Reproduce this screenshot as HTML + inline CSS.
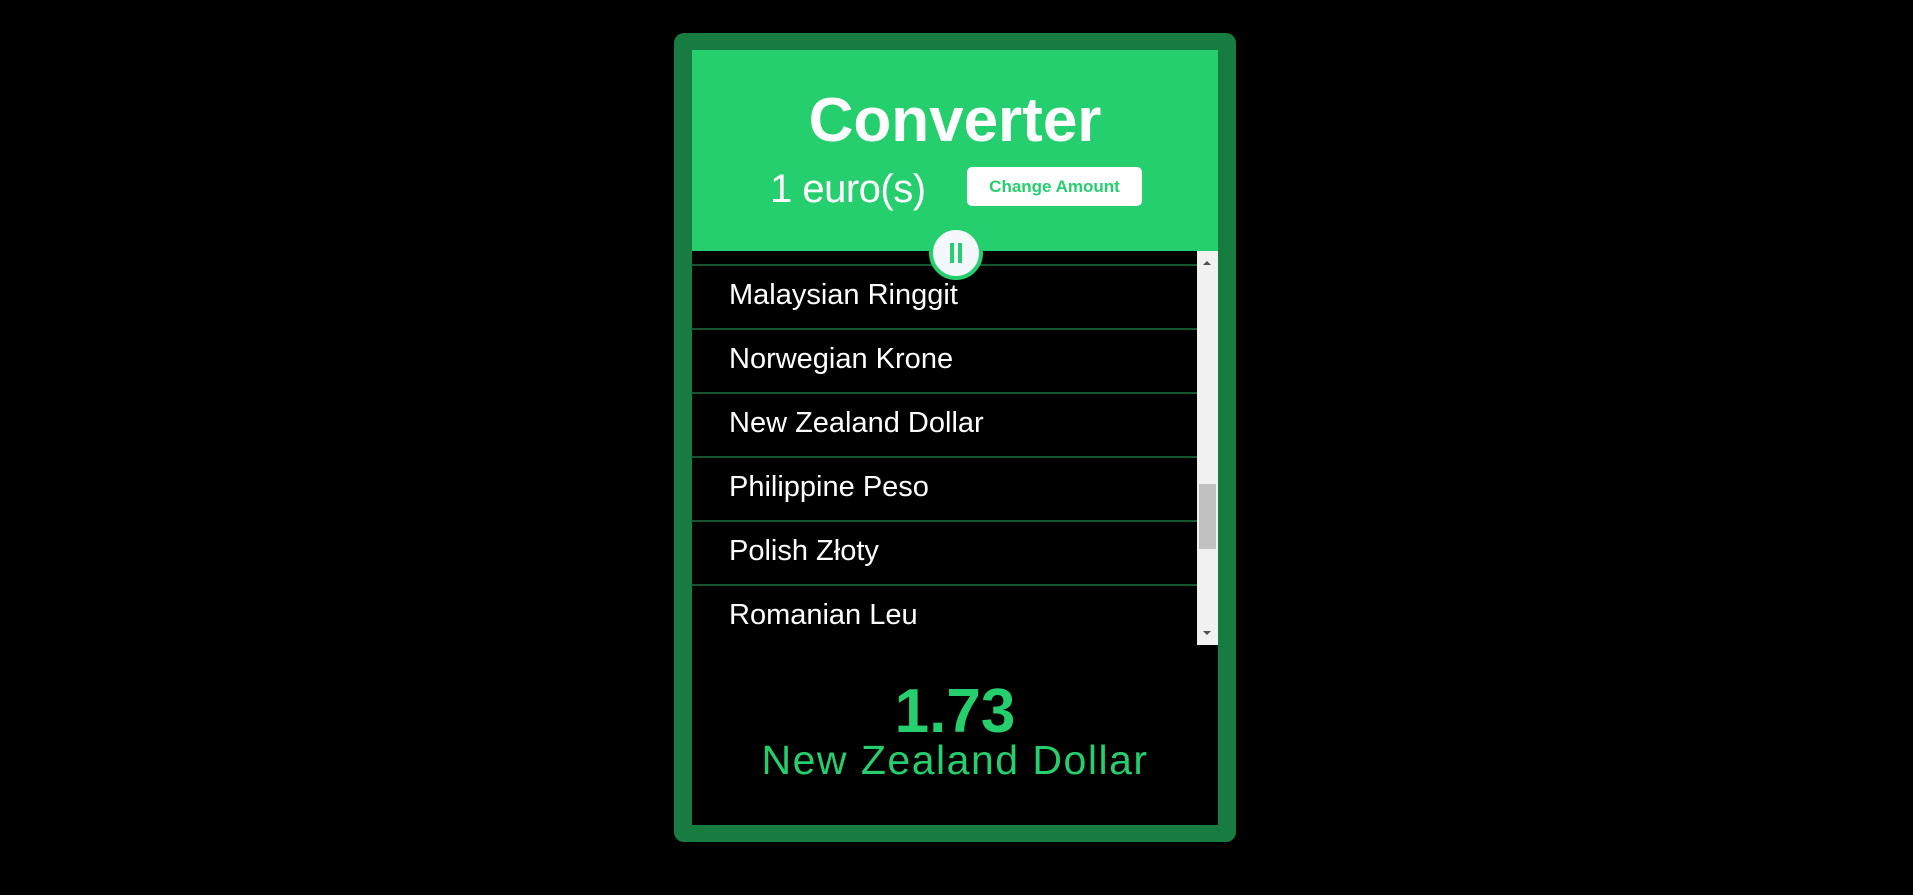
<!DOCTYPE html>
<html><head><meta charset="utf-8"><style>
html,body{margin:0;padding:0;background:#000;width:1913px;height:895px;overflow:hidden;font-family:"Liberation Sans",sans-serif}
.outer{position:absolute;left:674px;top:33px;width:562px;height:809px;background:#167c40;border-radius:10px}
.inner{position:absolute;left:692px;top:50px;width:526px;height:775px;background:#000;overflow:hidden}
.head{position:absolute;left:0;top:0;width:526px;height:201px;background:#26cf6d}
.title{position:absolute;left:0;width:526px;top:36px;text-align:center;color:#fff;font-weight:bold;font-size:62px;line-height:70px}
.amt{position:absolute;left:78px;top:114px;color:#fff;font-size:40px;font-weight:300;line-height:50px;letter-spacing:-0.5px}
.btn{position:absolute;left:275px;top:117px;width:175px;height:39px;background:#fff;border-radius:5px;color:#26cf6d;font-weight:bold;font-size:17px;line-height:39px;text-align:center}
.row{position:absolute;left:0;width:505px;height:64px;border-top:2px solid #14562f;box-sizing:border-box}
.row span{position:absolute;left:37px;top:11px;color:#fff;font-size:29px;line-height:36px}
.sb{position:absolute;left:505px;top:201px;width:21px;height:394px;background:#f1f1f1}
.thumb{position:absolute;left:2px;top:233px;width:17px;height:65px;background:#c1c1c1}
.res{position:absolute;left:0;width:526px;text-align:center;color:#26cf6d}
.circ{position:absolute;left:929px;top:226px;width:46px;height:46px;border-radius:50%;background:#f4f7fb;border:4px solid #26cf6d;box-sizing:content-box}
</style></head><body>
<div class="outer"></div>
<div class="inner">
 <div class="head">
  <div class="title">Converter</div>
  <div class="amt">1 euro(s)</div>
  <div class="btn">Change Amount</div>
 </div>
 <div class="row" style="top:214px"><span>Malaysian Ringgit</span></div>
 <div class="row" style="top:278px"><span>Norwegian Krone</span></div>
 <div class="row" style="top:342px"><span>New Zealand Dollar</span></div>
 <div class="row" style="top:406px"><span>Philippine Peso</span></div>
 <div class="row" style="top:470px"><span>Polish Złoty</span></div>
 <div class="row" style="top:534px;border-bottom:none"><span>Romanian Leu</span></div>
 <div class="sb"><div class="thumb"></div>
  <div style="position:absolute;left:6px;top:10px;width:0;height:0;border-left:4px solid transparent;border-right:4px solid transparent;border-bottom:4px solid #505050"></div>
  <div style="position:absolute;left:6px;top:380px;width:0;height:0;border-left:4px solid transparent;border-right:4px solid transparent;border-top:4px solid #505050"></div>
 </div>
 <div class="res" style="top:630px;font-size:62px;font-weight:bold;line-height:64px">1.73</div>
 <div class="res" style="top:685px;font-size:41px;font-weight:300;line-height:50px;letter-spacing:1.5px">New Zealand Dollar</div>
</div>
<div class="circ"><div style="position:absolute;left:17px;top:13px;width:4px;height:20px;background:#26cf6d"></div><div style="position:absolute;left:25px;top:13px;width:4px;height:20px;background:#26cf6d"></div></div>
</body></html>
